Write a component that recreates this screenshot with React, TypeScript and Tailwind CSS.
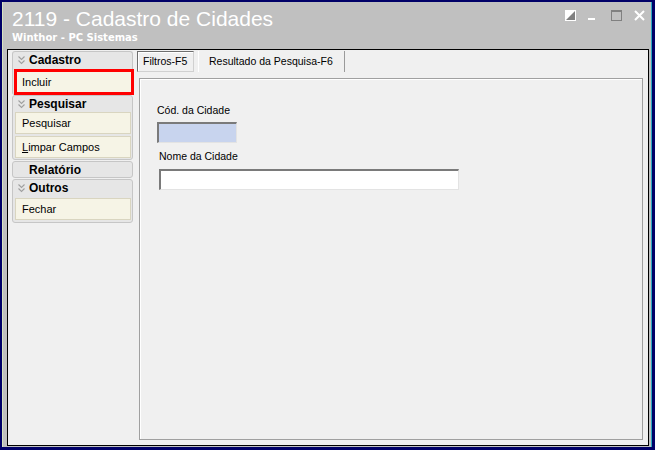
import React from "react";

/* ── Small drawings ── */
const Chevrons: React.FC = () => (
    <svg width="7" height="9" viewBox="0 0 7 9" className="shrink-0">
        <path
            d="M0.5 0.5 L3.5 3.5 L6.5 0.5 M0.5 4.5 L3.5 7.5 L6.5 4.5"
            fill="none"
            stroke="#a0a0a0"
            strokeWidth="1.1"
        />
    </svg>
);

const WindowControls: React.FC = () => (
    <div className="flex items-start gap-[12px] pt-[8px]">
        {/* restore / layout */}
        <svg width="11" height="11" viewBox="0 0 11 11">
            <rect x="0" y="0" width="11" height="11" fill="#ffffff" />
            <polygon points="1,10 10,1 10,10" fill="#808080" />
            <polygon points="1,1 9,1 1,9" fill="#ffffff" />
        </svg>
        {/* minimize */}
        <div className="w-[11px] h-[11px] relative">
            <div className="absolute left-0 top-[8px] w-[7px] h-[2px] bg-white" />
        </div>
        {/* maximize */}
        <svg width="11" height="11" viewBox="0 0 11 11">
            <rect x="0.5" y="0.5" width="10" height="10" fill="none" stroke="#808080" />
            <rect x="0" y="0" width="11" height="2" fill="#808080" />
        </svg>
        {/* close */}
        <svg width="11" height="11" viewBox="0 0 11 11">
            <path d="M1 1 L10 10 M10 1 L1 10" stroke="#ffffff" strokeWidth="2" />
        </svg>
    </div>
);

/* ── Side panel pieces ── */
const GroupHeader: React.FC<{ label: string; chevron?: boolean; h?: string }> = ({
    label,
    chevron = true,
    h = "h-[16px]",
}) => (
    <div className={`${h} flex items-center ${chevron ? "pl-[5px] gap-[4px]" : "pl-[16px]"}`}>
        {chevron && <Chevrons />}
        <span className="text-[12px] font-bold leading-none text-black">{label}</span>
    </div>
);

const Item: React.FC<{ children: React.ReactNode; className?: string }> = ({
    children,
    className = "",
}) => (
    <div
        className={`ml-[2px] w-[116px] h-[22px] flex items-center pl-[6px] bg-[#f6f4e6] border border-[#d9d5c0] text-[11px] text-black ${className}`}
    >
        {children}
    </div>
);

const Group: React.FC<{ children: React.ReactNode; className?: string }> = ({
    children,
    className = "",
}) => (
    <div className={`w-[121px] rounded-[3px] border border-[#c6c6c6] bg-[#e6e6e6] ${className}`}>
        {children}
    </div>
);

const SidePanel: React.FC = () => (
    <div className="w-[121px] ml-[4px] mt-[1px] flex flex-col">
        <Group className="border-b-0">
            <GroupHeader label="Cadastro" />
            <div className="mt-[1px] ml-[1px] w-[120px] h-[26px] flex items-center pl-[5px] bg-[#f6f4e6] border-[3px] border-[#ff0000] text-[11px] text-black">
                Incluir
            </div>
        </Group>
        <Group className="pb-[1px]">
            <GroupHeader label="Pesquisar" />
            <Item>Pesquisar</Item>
            <Item className="mt-[2px]">
                <span>
                    <span className="underline">L</span>impar Campos
                </span>
            </Item>
        </Group>
        <Group className="mt-[1px]">
            <GroupHeader label="Relatório" chevron={false} h="h-[15px]" />
        </Group>
        <Group className="mt-[1px] pb-[2px]">
            <GroupHeader label="Outros" />
            <Item className="mt-[2px]">Fechar</Item>
        </Group>
    </div>
);

/* ── Filter tab ── */
const FilterPanel: React.FC = () => (
    <div className="ml-[2px] mt-[6px] w-[504px] h-[362px] border border-[#a0a0a0] shadow-[inset_1px_1px_0_#ffffff] pl-[17px] pt-[25px] flex flex-col items-start">
        <span className="text-[10.5px] leading-[13px] text-black">Cód. da Cidade</span>
        <div className="mt-[5px] w-[80px] h-[21px] bg-[#c8d4ee] border-t-2 border-l-2 border-b border-r border-t-[#7a7a7a] border-l-[#7a7a7a] border-b-[#e3e3e3] border-r-[#e3e3e3]" />
        <span className="mt-[7px] ml-[2px] text-[10.5px] leading-[13px] text-black">Nome da Cidade</span>
        <div className="mt-[6px] ml-[2px] w-[300px] h-[21px] bg-white border-t-2 border-l-2 border-b border-r border-t-[#7a7a7a] border-l-[#7a7a7a] border-b-[#e3e3e3] border-r-[#e3e3e3]" />
    </div>
);

const TabsArea: React.FC = () => (
    <div className="ml-[4px] mt-[1px] flex flex-col">
        <div className="flex items-end h-[21px]">
            <div className="w-[57px] h-[21px] flex items-center pl-[5px] border border-[#d0d0d0] border-t-[#6e6e6e] border-l-[#6e6e6e] shadow-[inset_1px_1px_0_#ffffff] text-[10.5px] text-black">
                Filtros-F5
            </div>
            <div className="ml-[4px] w-[147px] h-[21px] flex items-center pl-[10px] border-l border-r border-l-[#ffffff] border-r-[#9a9a9a] text-[10.5px] text-black">
                Resultado da Pesquisa-F6
            </div>
        </div>
        <FilterPanel />
    </div>
);

/* ── App ── */
export default function App() {
    return (
        <div
            className="w-[655px] h-[450px] bg-[#000068] pt-[2px] pl-[2px] pr-[3px] pb-[3px]"
            style={{ fontFamily: '"Liberation Sans", Arial, sans-serif' }}
        >
            <div className="h-full flex flex-col bg-[#c0c0c0] border-l border-r border-l-[#d8e4c0] border-r-[#2aa6bf]">
                {/* Title bar */}
                <div className="h-[47px] flex justify-between pl-[9px] pr-[6px] shrink-0">
                    <div className="flex flex-col pt-[5px]">
                        <span className="text-[21px] leading-[24px] text-white">
                            2119 - Cadastro de Cidades
                        </span>
                        <span
                            className="mt-[1px] text-[10px] leading-[12px] font-bold text-white"
                            style={{ fontFamily: '"DejaVu Sans", Verdana, sans-serif' }}
                        >
                            Winthor - PC Sistemas
                        </span>
                    </div>
                    <WindowControls />
                </div>

                {/* Inner frame */}
                <div className="flex-1 ml-[4px] mr-[2px] mb-[1px] border border-black bg-[#f0f0f0] flex">
                    <SidePanel />
                    <TabsArea />
                </div>
            </div>
        </div>
    );
}
